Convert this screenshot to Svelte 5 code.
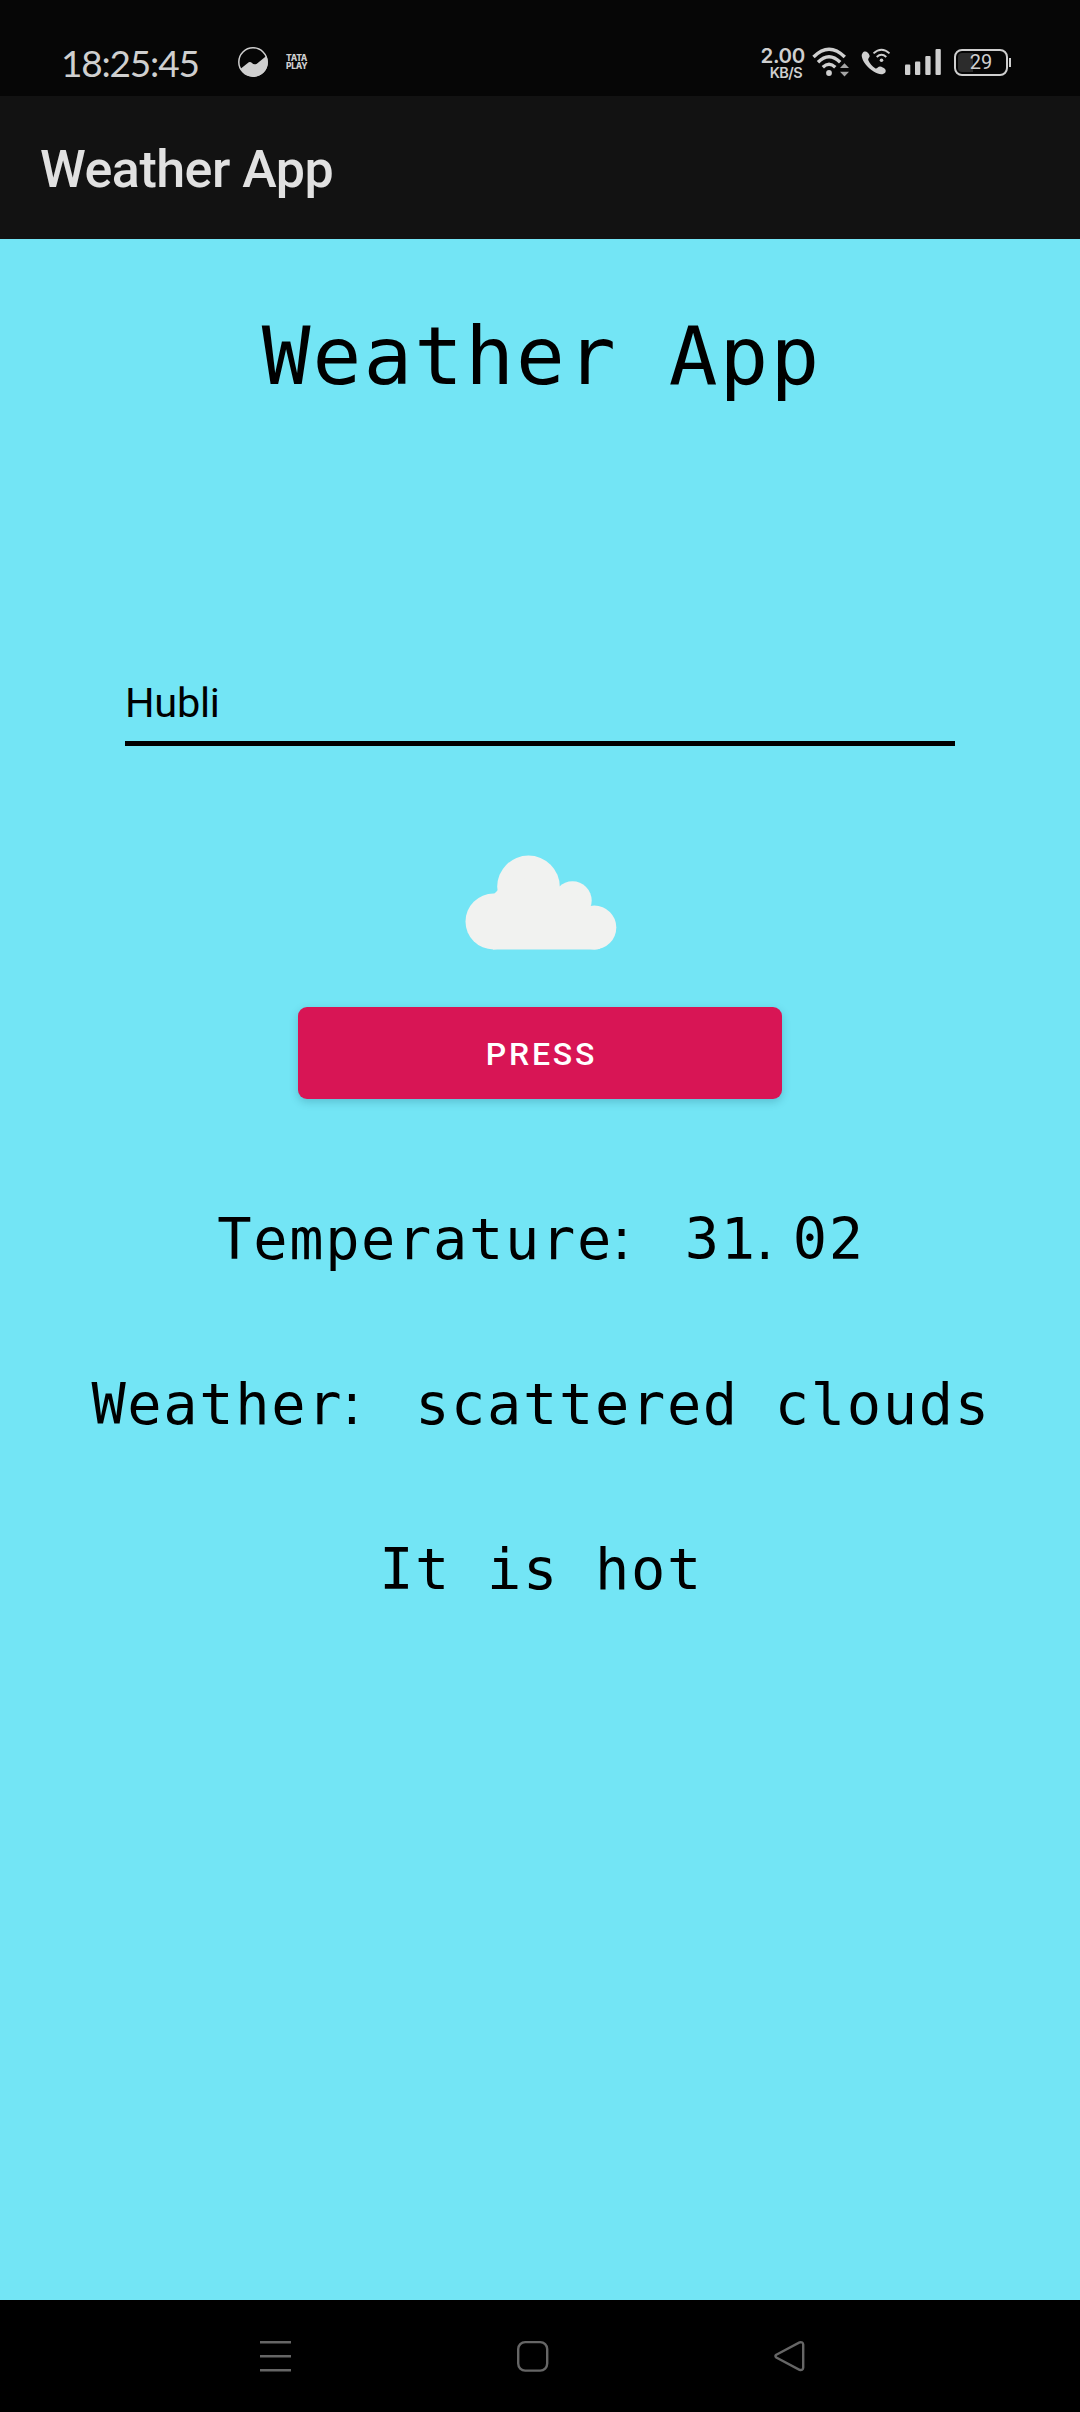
<script>
  let city = $state('Hubli');
  const temperature = '31.02';
  const conditions = 'scattered clouds';
  const verdict = 'It is hot';
  const [degrees, hundredths] = temperature.split('.');
</script>

<div class="screen">
  <header class="status">
    <span class="clock">18:25:45</span>
    <svg class="globe" width="30" height="30" viewBox="0 0 30 30">
      <circle cx="15" cy="15" r="14.2" fill="none" stroke="#cfcfcf" stroke-width="1.5" />
      <path d="M2.600 21.800 L9.500 16.200 Q12 13.800 14 16 Q15.500 18 18.500 17 L28.300 9 A14.300 14.300 0 0 1 2.600 21.800Z" fill="#cfcfcf" />
    </svg>
    <span class="brand"><span>TATA</span><span>PLAY</span></span>
    <span class="grow"></span>
    <span class="speed"><b>2.00</b><small>KB/S</small></span>
    <svg class="wifi" width="38" height="30" viewBox="0 0 38 30">
      <g fill="none" stroke="#cfcfcf" stroke-width="3.4">
        <path d="M1.5 10 Q17 -5.5 32.800 10" />
        <path d="M6 15.300 Q17 4.200 28.200 15.300" />
        <path d="M10.800 20.300 Q17 14.300 23.300 20.300" />
      </g>
      <circle cx="17" cy="26" r="2.900" fill="#cfcfcf" />
      <path d="M28 21 L32.500 16.300 L37 21Z M28 24.800 L32.500 29.500 L37 24.800Z" fill="#a5a5a5" />
    </svg>
    <svg class="call" width="30" height="28" viewBox="0 0 30 28">
      <path d="M1.600 5 C3.500 2.200 7.500 3.500 8.700 8 C8.700 9.600 6.700 10.500 7.200 12 C8.700 15.500 11.200 18.200 14.500 20.500 C16 21.200 17 18.400 19 18.400 C23 19.200 26 21.600 24.300 24.500 C22 27.300 17.500 26.500 13 23.800 C6 19.500 1.500 13.500 .7 8 Q.5 6.300 1.600 5Z" fill="#cfcfcf" />
      <g fill="none" stroke="#cfcfcf" stroke-width="1.900">
        <path d="M12.500 5.400 Q20.500 -1.800 28.500 5.400" />
        <path d="M15.700 9 Q20.500 4.600 25.300 9" />
      </g>
      <circle cx="20.500" cy="12.300" r="1.800" fill="#cfcfcf" />
    </svg>
    <svg class="signal" width="36" height="26" viewBox="0 0 36 26" fill="#cfcfcf">
      <rect x="0" y="15.500" width="5.300" height="10.500" rx="1" />
      <rect x="10" y="12.500" width="5.300" height="13.500" rx="1" />
      <rect x="20.300" y="7" width="5.300" height="19" rx="1" />
      <rect x="30.500" y="0" width="5.300" height="26" rx="1" />
    </svg>
    <span class="battery"><span class="charge"></span><span class="level">29</span></span>
    <span class="tip"></span>
  </header>

  <div class="appbar">Weather App</div>

  <main>
    <h1>Weather App</h1>
    <input bind:value={city} aria-label="City" />
    <svg class="cloud" width="152" height="96" viewBox="0 0 152 96" fill="#f1f2f0">
      <circle cx="28.500" cy="66.500" r="28" />
      <circle cx="63.500" cy="31.800" r="31.300" />
      <circle cx="107.500" cy="45.500" r="19.200" />
      <circle cx="129.300" cy="72.500" r="22" />
      <path d="M28 40 L48 20 L92 32 L124 46 L135 93.800 Q133 94.500 130 94.500 H28Z" />
    </svg>
    <button>PRESS</button>
    <p>Temperature<i>:</i> {degrees}<i>.</i>{hundredths}</p>
    <p>Weather<i>:</i> {conditions}</p>
    <p>{verdict}</p>
  </main>

  <nav>
    <svg width="32" height="32" viewBox="0 0 32 32">
      <path d="M0 2.300H31 M0 16.300H31 M0 30.300H31" />
    </svg>
    <svg width="32" height="32" viewBox="0 0 32 32">
      <rect x="1.200" y="2.100" width="29" height="28.500" rx="7" />
    </svg>
    <svg width="32" height="32" viewBox="0 0 32 32">
      <path d="M2.300 14.700 L25.500 2.400 Q29 1.600 29.200 4.500 V27.700 Q29 30.600 25.500 29.800 L2.300 17.500 Q.5 16.100 2.300 14.700Z" />
    </svg>
  </nav>
</div>

<style>
  :global(body) {
    margin: 0;
    background: #000;
  }
  .screen {
    width: 1080px;
    height: 2412px;
    display: flex;
    flex-direction: column;
    background: #73e5f5;
    font-family: Roboto, sans-serif;
  }
  .status {
    box-sizing: border-box;
    height: 96px;
    padding: 28px 69px 0 61px;
    display: flex;
    align-items: center;
    background: #060606;
    color: #cfcfcf;
  }
  .clock {
    width: 137px;
    padding-top: 2px;
    font: 37px/44px Lato, sans-serif;
    letter-spacing: -1.2px;
    white-space: nowrap;
  }
  .globe {
    margin-left: 40px;
  }
  .brand {
    width: 24px;
    margin-left: 18px;
    display: flex;
    flex-direction: column;
    font: 800 8.500px/8px Inter, sans-serif;
    letter-spacing: -0.3px;
  }
  .grow {
    flex: 1;
  }
  .speed {
    width: 43px;
    padding-top: 2px;
    display: flex;
    flex-direction: column;
    align-items: flex-end;
    font-family: Inter, sans-serif;
  }
  .speed b {
    font-size: 20.500px;
    line-height: 17px;
    font-weight: 600;
    letter-spacing: -0.3px;
  }
  .speed small {
    margin: 2px 3px 0 0;
    font-size: 14.500px;
    line-height: 14px;
    font-weight: 600;
    letter-spacing: -0.6px;
  }
  .wifi {
    margin-left: 7px;
  }
  .call {
    margin-left: 11px;
  }
  .signal {
    margin-left: 14px;
  }
  .battery {
    box-sizing: border-box;
    width: 54px;
    height: 27px;
    margin-left: 13px;
    border: 2px solid #cfcfcf;
    border-radius: 8px;
    display: grid;
    align-items: center;
  }
  .charge,
  .level {
    grid-area: 1 / 1;
  }
  .charge {
    width: 15px;
    height: 19px;
    margin-left: 2px;
    border-radius: 4px 0 0 4px;
    background: #2c2c2c;
  }
  .level {
    text-align: center;
    font-size: 20px;
    line-height: 23px;
  }
  .tip {
    width: 2px;
    height: 9px;
    margin-left: 1px;
    background: #cfcfcf;
  }
  .appbar {
    height: 143px;
    padding-left: 40px;
    background: #121212;
    color: #e1e1e1;
    font-size: 52px;
    font-weight: 500;
    line-height: 148px;
    letter-spacing: -0.500px;
  }
  main {
    flex: 1;
    display: flex;
    flex-direction: column;
    align-items: center;
  }
  h1,
  p {
    margin: 0;
    color: #000;
    font-family: 'DejaVu Sans Mono', monospace;
    font-weight: 400;
    white-space: pre;
  }
  h1 {
    margin-top: 67px;
    padding-left: 3px;
    font-size: 81px;
    line-height: 100px;
    letter-spacing: 2.100px;
  }
  input {
    box-sizing: border-box;
    width: 830px;
    height: 86px;
    margin-top: 254px;
    padding: 4px 0 0;
    border: 0;
    border-bottom: 5.500px solid #000;
    border-radius: 0;
    outline: 0;
    background: none;
    color: #000;
    font: 41.500px Roboto, sans-serif;
    letter-spacing: -0.300px;
  }
  .cloud {
    margin-top: 109px;
    margin-left: 2px;
  }
  button {
    width: 484px;
    height: 92px;
    margin-top: 56px;
    margin-bottom: 100px;
    padding: 2px 0 0 3px;
    border: 0;
    border-radius: 9px;
    background: #d81555;
    box-shadow: 0 3px 8px rgb(0 60 80 / 0.22);
    color: #fff;
    font: 500 32px Roboto, sans-serif;
    letter-spacing: 2.800px;
  }
  p {
    height: 80px;
    margin-bottom: 85px;
    padding-left: 2px;
    font-size: 57px;
    line-height: 80px;
    letter-spacing: 1.650px;
  }
  /* Proportional punctuation in a full-width cell, so the dots hug the left side. */
  i {
    display: inline-block;
    width: 36px;
    font-family: 'DejaVu Sans', sans-serif;
    font-style: normal;
    text-indent: -1px;
  }
  nav {
    height: 112px;
    padding: 0 274px 0 260px;
    display: flex;
    align-items: center;
    justify-content: space-between;
    background: #000;
  }
  nav svg {
    fill: none;
    stroke: #666;
    stroke-width: 2.400;
  }
</style>
